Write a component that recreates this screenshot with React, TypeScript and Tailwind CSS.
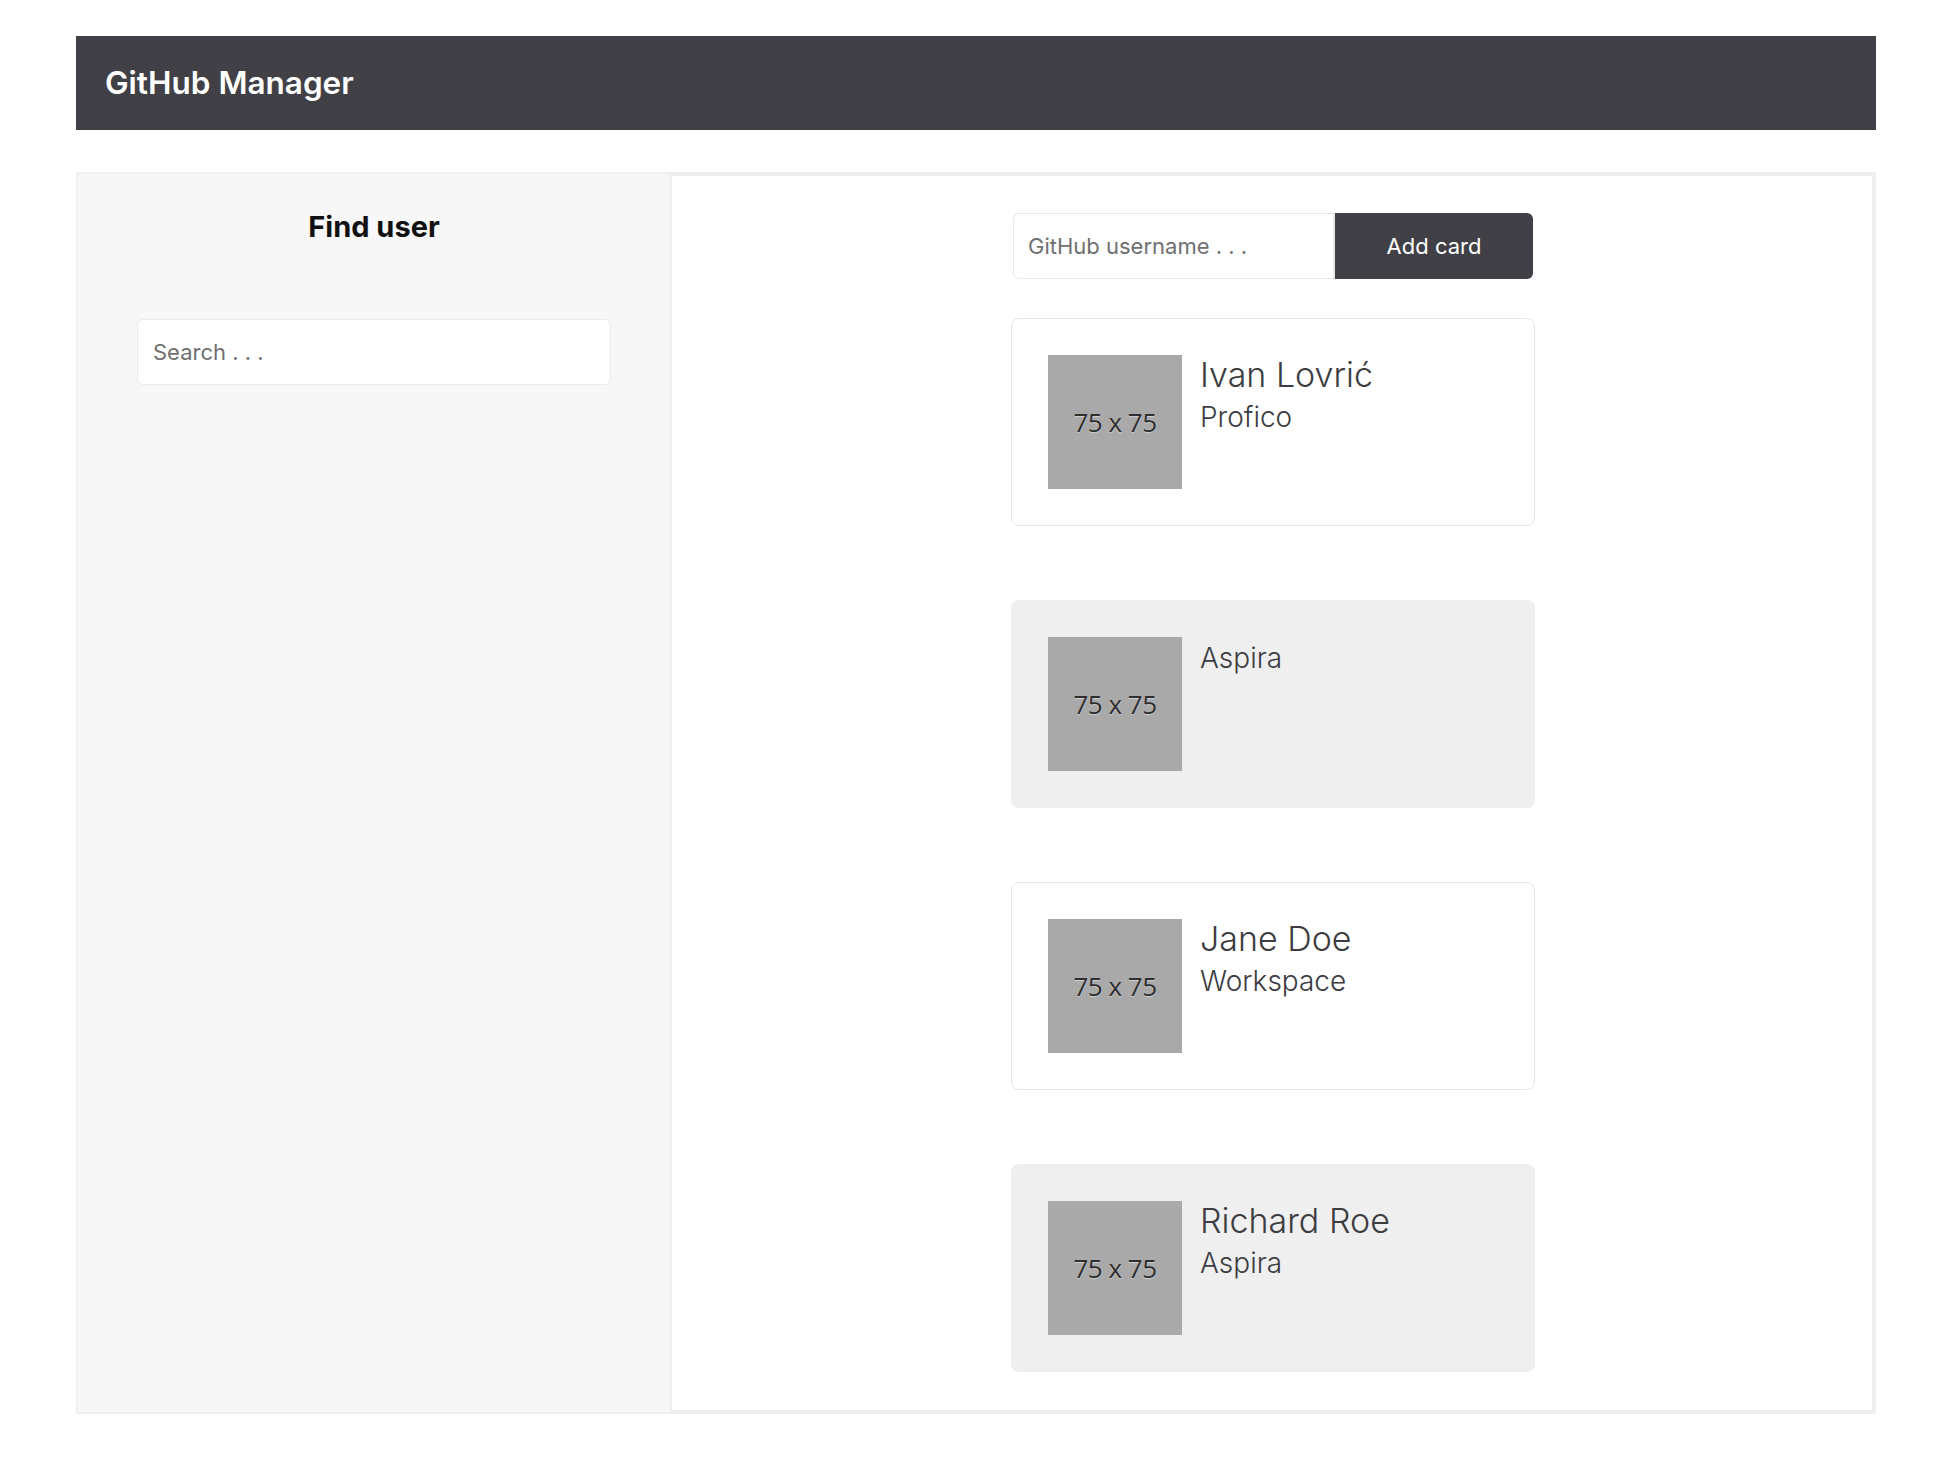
import { FC } from "react";

type User = { name?: string; company: string };

const users: User[] = [
  { name: "Ivan Lovrić", company: "Profico" },
  { company: "Aspira" },
  { name: "Jane Doe", company: "Workspace" },
  { name: "Richard Roe", company: "Aspira" },
];

const Placeholder: FC = () => (
  <div className="w-[134px] h-[134px] shrink-0 bg-[#a9a9a9] flex items-center justify-center">
    <span className="font-['Open_Sans',sans-serif] text-[26px] tracking-[-0.5px] text-[#2e2e2e] [text-shadow:0_1px_1px_rgba(255,255,255,0.45)]">
      75 x 75
    </span>
  </div>
);

const UserCard: FC<{ user: User; striped: boolean }> = ({ user, striped }) => (
  <div
    className={
      striped
        ? "w-[524px] flex items-start p-[37px] rounded-lg bg-[#efefef]"
        : "w-[524px] flex items-start p-9 rounded-lg bg-white border border-[#e6e6e6]"
    }
  >
    <Placeholder />
    <div className="ml-[18px] text-[#3c3c41]">
      {user.name && <div className="text-[34px] font-light leading-[1.2]">{user.name}</div>}
      <div className="text-[28px] font-light leading-[1.5]">{user.company}</div>
    </div>
  </div>
);

const App: FC = () => (
  <div className="min-h-screen bg-white font-['Inter',sans-serif]">
    <div className="w-[1800px] ml-[76px] pt-9">
      {/* Header */}
      <header className="h-[94px] bg-[#414046] flex items-center pl-[29px]">
        <h1 className="text-white text-[31.5px] font-semibold">GitHub Manager</h1>
      </header>

      <div className="mt-[42px] border-2 border-[#efefef] flex">
        {/* Sidebar */}
        <aside className="w-[592px] bg-[#f7f7f7] flex flex-col items-center pt-9">
          <h2 className="text-[29px] font-bold text-[#111] leading-[1.2]">Find user</h2>
          <input
            className="mt-[74px] w-[474px] h-[66px] px-[15px] bg-white border border-[#eaeaea] rounded-md text-[22px] placeholder:text-[#707070] outline-none"
            placeholder="Search . . ."
          />
        </aside>

        {/* Cards */}
        <main className="flex-1 border-2 border-[#efefef] flex flex-col items-center pl-[2px] pt-[37px] pb-[38px]">
          <div className="flex w-[520px] h-[66px]">
            <input
              className="flex-1 min-w-0 px-[14px] bg-white border border-r-2 border-[#e8e8e8] rounded-l-md text-[22px] placeholder:text-[#707070] outline-none"
              placeholder="GitHub username . . ."
            />
            <button className="w-[198px] bg-[#414046] text-white text-[22px] rounded-r-md">Add card</button>
          </div>

          <div className="mt-[39px] flex flex-col gap-[74px]">
            {users.map((u, i) => (
              <UserCard key={i} user={u} striped={i % 2 === 1} />
            ))}
          </div>
        </main>
      </div>
    </div>
  </div>
);

export default App;
